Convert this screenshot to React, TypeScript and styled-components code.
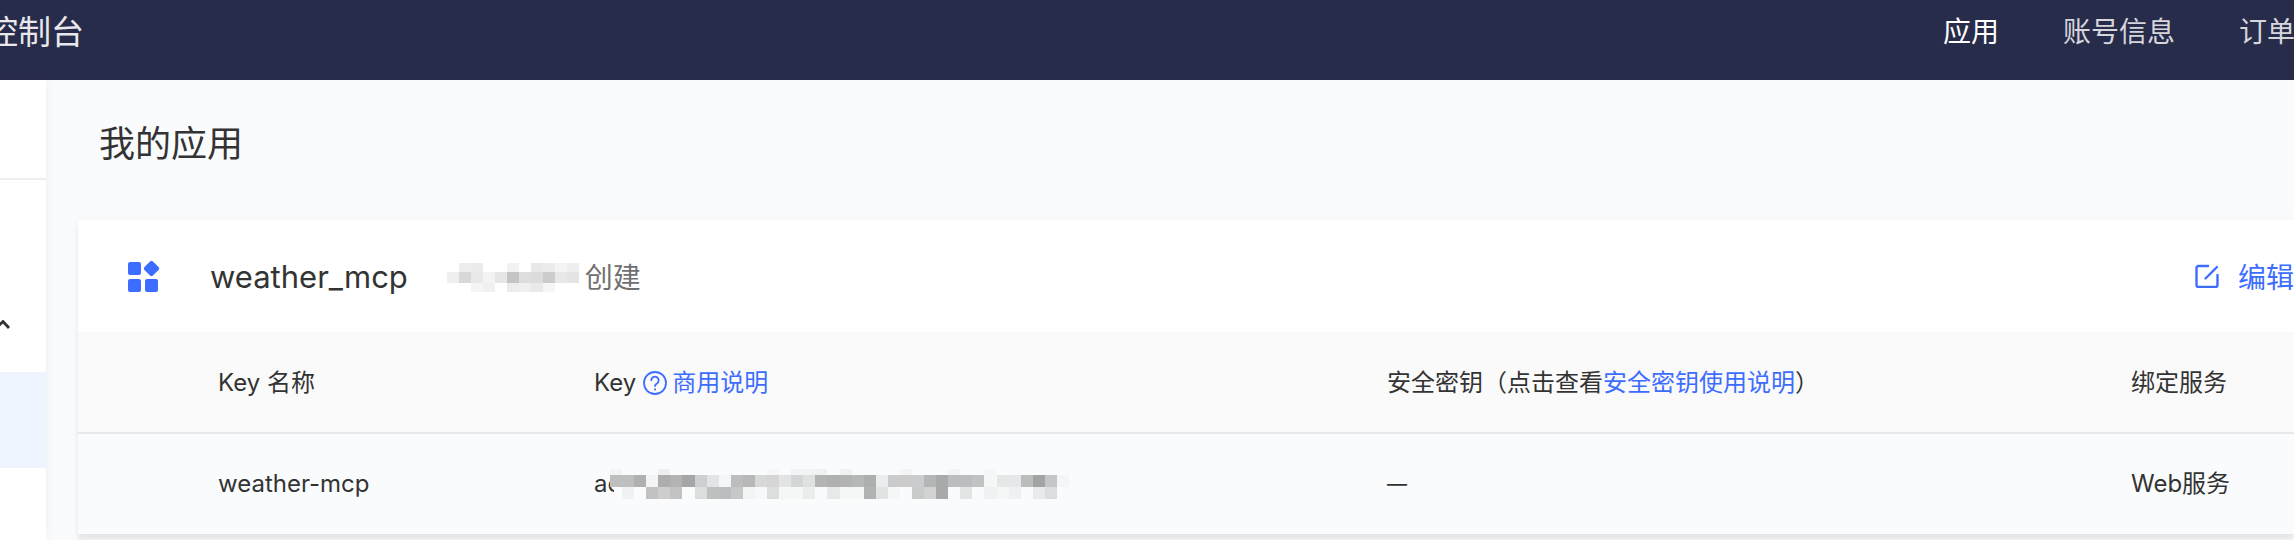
import * as React from 'react';
import styled, { createGlobalStyle } from 'styled-components';

const KEY_FAINT = [
  '#f3f4f5', '', '', '', '#eef0ef', '', '', '', '', '',
  '', '', '', '#f6f7f8', '', '#f2f3f4', '#f2f3f4', '#f0f1f2', '', '#f0f1f2',
  '', '', '', '', '#f3f4f5', '', '', '', '#f3f4f5', '',
  '', '#f5f6f8', '', '', '', '', '', '',
];

const KEY_TOP = [
  '#bdbebe', '#bebfbf', '#b0b0b0', '#f3f4f5', '#adadad', '#b3b3b3', '#a5a6a7', '#cdcfd1', '#e3e4e6', '#f5f6f8',
  '#bcbdbf', '#b8b8b8', '#d7d8d8', '#d6d6d6', '#e2e3e3', '#d4d5d7', '#dfe1e1', '#b3b4b4', '#b0b0b0', '#b2b3b3',
  '#b6b7b7', '#adaeae', '#ebecee', '#cacbcc', '#cbcbcc', '#cbcccf', '#b4b5b6', '#a9abab', '#bcbdbf', '#bcbdbe',
  '#c1c3c3', '#f5f6f8', '#e5e7e6', '#e6e7ea', '#bbbcbc', '#a2a3a5', '#c5c6c8', '#f5f6f8',
];

const KEY_BOTTOM = [
  '', '#f0f1f2', '#fafbfd', '#c2c2c2', '#cdcdcd', '#c3c3c3', '', '#dcdedd', '#bebfbf', '#bcbdbe',
  '#c6c7c7', '#f3f4f5', '#f7f8fa', '#dcdddd', '#f5f6f6', '#f5f6f6', '#ebeded', '', '#e8e9e9', '#f5f6f6',
  '#f5f6f6', '#b1b2b2', '#e1e2e4', '#f5f7f7', '', '#c9cbcb', '#d2d2d3', '#a8a9ab', '', '#e3e5e5',
  '', '#f0f1f3', '#f5f7f6', '#eff0f1', '', '#e9eaec', '#dcdde0', '',
];

const CREATOR_ROWS = [
  ['', '#ededed', '#ebebeb', '', '', '#f2f2f2', '', '#e8e8e8', '#ececec', '#f4f4f4', '#eeeeee'],
  ['#efefef', '#d8d8d8', '#e8e8e8', '#f3f3f3', '#e6e6e6', '#c4c4c4', '#dedede', '#dcdcdc', '#cccccc', '#e8e8e8', '#e4e4e4'],
  ['', '', '#f5f5f5', '#f0f0f0', '', '#ececec', '#f0f0f0', '#eaeaea', '#f6f6f6', '', ''],
];

const Mosaic = ({ rows, cell, rowHeights }: { rows: string[][]; cell: number; rowHeights: number[] }) => {
  const width = rows[0].length * cell;
  const height = rowHeights.reduce((sum, h) => sum + h, 0);
  let y = 0;
  return (
    <svg width={width} height={height} viewBox={`0 0 ${width} ${height}`} shapeRendering="crispEdges">
      {rows.map((row, r) => {
        const top = y;
        y += rowHeights[r];
        return row.map((fill, c) =>
          fill ? <rect key={`${r}-${c}`} x={c * cell} y={top} width={cell} height={rowHeights[r]} fill={fill} /> : null,
        );
      })}
    </svg>
  );
};

const AppIcon = () => (
  <svg width="34" height="32" viewBox="0 0 34 32" fill="#3d6dff">
    <rect x="0" y="2" width="13" height="13" rx="2" />
    <rect x="0" y="19" width="13" height="13" rx="2" />
    <rect x="17" y="19" width="13" height="13" rx="2" />
    <rect x="17.500" y="2.500" width="12" height="12" rx="2" transform="rotate(45 23.500 8.500)" />
  </svg>
);

const EditIcon = () => (
  <svg width="24" height="24" viewBox="0 0 24 24" fill="none" stroke="#3d6dff" strokeWidth="2.400" strokeLinecap="round" strokeLinejoin="round">
    <path d="M13 2H3.500A2 2 0 0 0 1.500 4v17a2 2 0 0 0 2 2h17a2 2 0 0 0 2-2V11" />
    <path d="M10.500 14.500 22 3" />
  </svg>
);

const HelpIcon = () => (
  <svg width="24" height="24" viewBox="0 0 24 24" fill="none" stroke="#3d6dff" strokeWidth="1.800" strokeLinecap="round">
    <circle cx="12" cy="12" r="11" />
    <path d="M8.300 9.300a3.700 3.700 0 1 1 5.600 3.200c-1.200.7-1.900 1.300-1.900 2.600" />
    <path d="M12 18.300v.1" strokeWidth="2" />
  </svg>
);

const App = () => (
  <Page>
    <GlobalStyle />
    <Header>
      <Brand>控制台</Brand>
      <Nav>
        <NavItem $active>应用</NavItem>
        <NavItem>账号信息</NavItem>
        <NavItem>订单</NavItem>
      </Nav>
    </Header>
    <Body>
      <Sidebar>
        <SideTop />
        <GroupRow>
          <svg width="14" height="9" viewBox="0 0 14 9" fill="none" stroke="#333" strokeWidth="2.800">
            <path d="M-4 8 3 1.500 9 8" />
          </svg>
        </GroupRow>
        <ActiveItem />
      </Sidebar>
      <Main>
        <Title>我的应用</Title>
        <Card>
          <CardHead>
            <AppIcon />
            <AppName>weather_mcp</AppName>
            <Creator>
              <CreatorBlur>
                <Mosaic rows={CREATOR_ROWS} cell={12} rowHeights={[9, 11, 9]} />
              </CreatorBlur>
              <CreatedLabel>创建</CreatedLabel>
            </Creator>
            <EditLink>
              <EditIcon />
              编辑
            </EditLink>
          </CardHead>
          <HeadRow>
            <Cell>Key 名称</Cell>
            <Cell>
              Key
              <HelpLink>
                <HelpIcon />
                <Link>商用说明</Link>
              </HelpLink>
            </Cell>
            <Cell>
              安全密钥（点击查看<Link>安全密钥使用说明</Link>）
            </Cell>
            <Cell>绑定服务</Cell>
          </HeadRow>
          <DataRow>
            <Cell>weather-mcp</Cell>
            <Cell>
              ac
              <KeyBlur>
                <Mosaic rows={[KEY_FAINT, KEY_TOP, KEY_BOTTOM]} cell={12.08} rowHeights={[6, 12, 12]} />
              </KeyBlur>
              <KeyMask />
            </Cell>
            <Cell>
              <Dash>—</Dash>
            </Cell>
            <Cell>Web服务</Cell>
          </DataRow>
        </Card>
      </Main>
    </Body>
  </Page>
);

export default App;

const GlobalStyle = createGlobalStyle`
  html, body {
    margin: 0;
    padding: 0;
    background: #fafbfd;
  }

  body {
    font-family: Inter, "Noto Sans CJK SC", sans-serif;
    color: #2b2b2b;
  }
`;

const Page = styled.div`
  width: 2294px;
  height: 540px;
  overflow: hidden;
  display: flex;
  flex-direction: column;
`;

const Header = styled.header`
  height: 80px;
  flex: none;
  display: flex;
  align-items: center;
  justify-content: space-between;
  background: #282c4b;
  padding-bottom: 20px;
  box-sizing: border-box;
`;

const Brand = styled.div`
  font-size: 33px;
  color: #e8e8ec;
  margin-left: -15px;
`;

const Nav = styled.nav`
  display: flex;
  gap: 64px;
  margin-right: -1px;
`;

const NavItem = styled.span<{ $active?: boolean }>`
  font-size: 28px;
  color: ${({ $active }) => ($active ? '#ffffff' : '#d6d6dc')};
`;

const Body = styled.div`
  flex: 1;
  display: flex;
  min-height: 0;
`;

const Sidebar = styled.aside`
  width: 46px;
  flex: none;
  background: #ffffff;
  box-shadow: 0 0 12px rgba(0, 0, 0, 0.06);
`;

const SideTop = styled.div`
  height: 98px;
  border-bottom: 2px solid #eeeeee;
`;

const GroupRow = styled.div`
  height: 192px;
  box-sizing: border-box;
  padding-top: 140px;
  overflow: hidden;

  svg {
    display: block;
  }
`;

const ActiveItem = styled.div`
  height: 96px;
  background: #eef5ff;
`;

const Main = styled.main`
  flex: 1;
  min-width: 0;
  padding: 32px 0 0 32px;
`;

const Title = styled.h1`
  margin: 0 0 44px 21px;
  font-size: 36px;
  font-weight: 400;
  line-height: 64px;
  color: #333333;
`;

const Card = styled.section`
  background: #ffffff;
  box-shadow: 0 6px 4px rgba(0, 0, 0, 0.07), 0 0 10px rgba(0, 0, 0, 0.04);
`;

const CardHead = styled.div`
  height: 112px;
  display: flex;
  align-items: center;
  padding-left: 50px;
`;

const AppName = styled.div`
  font-size: 31px;
  margin-left: 48px;
  color: #333333;
`;

const Creator = styled.div`
  display: flex;
  align-items: center;
  margin-left: 39px;
`;

const CreatorBlur = styled.div`
  line-height: 0;
  margin-top: 3px;
`;

const CreatedLabel = styled.span`
  font-size: 28px;
  color: #707070;
  margin-left: 6px;
`;

const EditLink = styled.div`
  margin-left: auto;
  display: flex;
  align-items: center;
  gap: 19px;
  font-size: 28px;
  color: #3d6dff;
`;

const HeadRow = styled.div`
  display: grid;
  grid-template-columns: 376px 793px 744px 1fr;
  align-items: center;
  height: 102px;
  box-sizing: border-box;
  padding: 2px 0 0 140px;
  background: #fafafa;
  border-bottom: 2px solid #e8e8e8;
`;

const DataRow = styled(HeadRow)`
  height: 100px;
  padding-top: 0;
  background: #fafbfd;
  border-bottom: none;
`;

const Cell = styled.div`
  position: relative;
  display: flex;
  align-items: center;
  font-size: 24px;
  line-height: 32px;
  color: #333333;
  white-space: nowrap;
`;

const Dash = styled.span`
  font-size: 20px;
`;

const Link = styled.span`
  color: #3d6dff;
`;

const HelpLink = styled.span`
  display: inline-flex;
  align-items: center;
  gap: 5px;
  margin-left: 7px;
`;

const KeyBlur = styled.div`
  position: absolute;
  left: 16px;
  top: 1px;
  line-height: 0;
`;

const KeyMask = styled.div`
  position: absolute;
  left: 20px;
  top: 19px;
  width: 8px;
  height: 12px;
  background: #fafbfd;
`;
